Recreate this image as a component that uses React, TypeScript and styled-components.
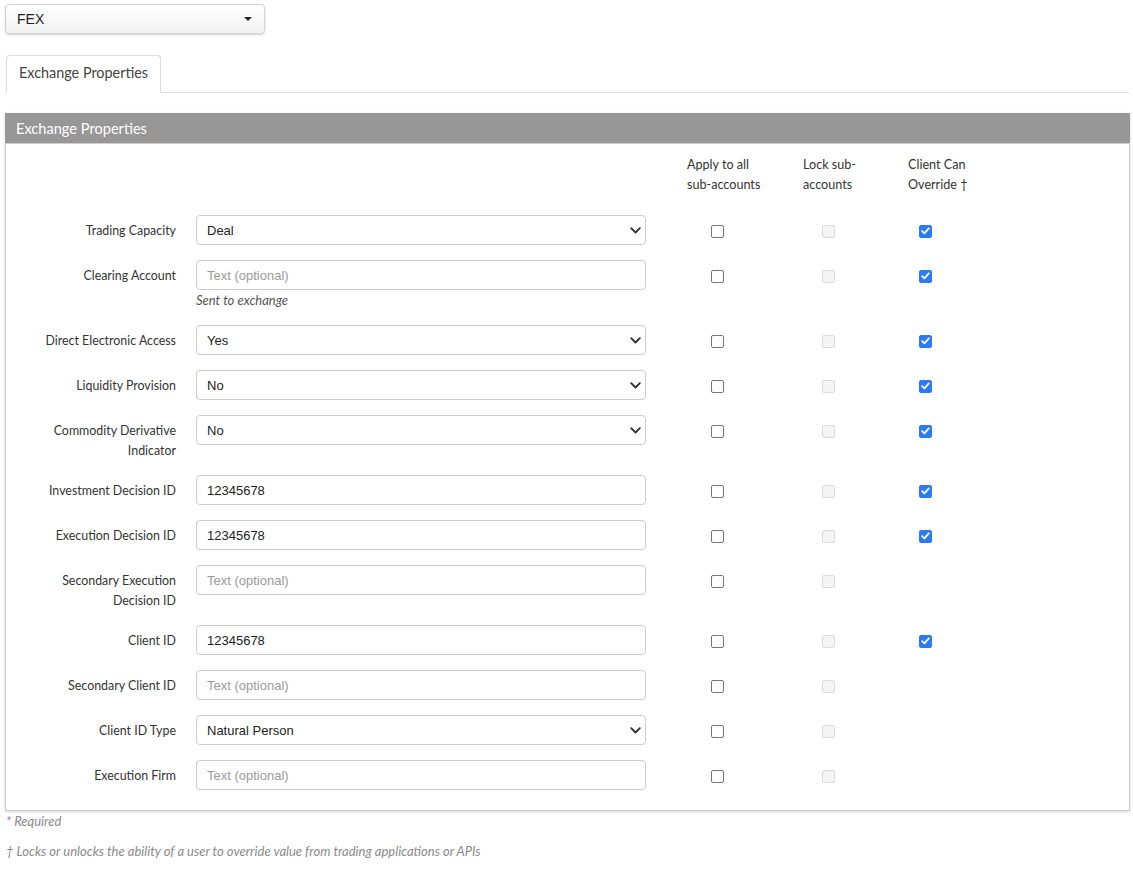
import styled, { createGlobalStyle } from "styled-components"

const GlobalStyle = createGlobalStyle`
    html, body {
        margin: 0;
        padding: 0;
        background: #ffffff;
    }
    body {
        font-family: Lato, "Noto Sans", sans-serif;
        color: #333;
    }
`

type Row = {
    label: string
    kind: 'select' | 'text'
    value?: string
    help?: string
    override?: boolean
}

const rows: Row[] = [
    { label: 'Trading Capacity', kind: 'select', value: 'Deal', override: true },
    { label: 'Clearing Account', kind: 'text', help: 'Sent to exchange', override: true },
    { label: 'Direct Electronic Access', kind: 'select', value: 'Yes', override: true },
    { label: 'Liquidity Provision', kind: 'select', value: 'No', override: true },
    { label: 'Commodity Derivative Indicator', kind: 'select', value: 'No', override: true },
    { label: 'Investment Decision ID', kind: 'text', value: '12345678', override: true },
    { label: 'Execution Decision ID', kind: 'text', value: '12345678', override: true },
    { label: 'Secondary Execution Decision ID', kind: 'text', override: false },
    { label: 'Client ID', kind: 'text', value: '12345678', override: true },
    { label: 'Secondary Client ID', kind: 'text', override: false },
    { label: 'Client ID Type', kind: 'select', value: 'Natural Person', override: false },
    { label: 'Execution Firm', kind: 'text', override: false },
]

const Chevron = () => (
    <svg width="11" height="7" viewBox="0 0 11 7">
        <path d="M1.2 1.2 L5.5 5.5 L9.8 1.2" fill="none" stroke="#333" strokeWidth="1.9" strokeLinecap="round" strokeLinejoin="round" />
    </svg>
)

const Check = () => (
    <svg width="9" height="8" viewBox="0 0 9 8">
        <path d="M1.2 4.2 L3.4 6.4 L7.8 1.4" fill="none" stroke="#fff" strokeWidth="1.8" strokeLinecap="round" strokeLinejoin="round" />
    </svg>
)

export default function App() {
    return (
        <Page>
            <GlobalStyle />
            <Dropdown>
                <span>FEX</span>
                <Caret />
            </Dropdown>

            <TabStrip>
                <Tab>Exchange Properties</Tab>
            </TabStrip>

            <Panel>
                <PanelHeader>Exchange Properties</PanelHeader>
                <PanelBody>
                    <HeadRow>
                        <div />
                        <div />
                        <HeadCell offset={41}>Apply to all<br />sub-accounts</HeadCell>
                        <HeadCell offset={13}>Lock sub-<br />accounts</HeadCell>
                        <HeadCell offset={42}>Client Can<br />Override †</HeadCell>
                    </HeadRow>

                    {rows.map((row) => (
                        <FieldRow key={row.label}>
                            <Label>{row.label}</Label>
                            <div>
                                {row.kind === 'select' ? (
                                    <SelectBox>
                                        <span>{row.value}</span>
                                        <ChevronSpot><Chevron /></ChevronSpot>
                                    </SelectBox>
                                ) : (
                                    <TextInput placeholder="Text (optional)" defaultValue={row.value ?? ''} />
                                )}
                                {row.help && <Help>{row.help}</Help>}
                            </div>
                            <BoxCell shift={-1}>
                                <Box />
                            </BoxCell>
                            <BoxCell>
                                <Box disabled />
                            </BoxCell>
                            <BoxCell>
                                {row.override && <Box checked><Check /></Box>}
                            </BoxCell>
                        </FieldRow>
                    ))}
                </PanelBody>
            </Panel>

            <Note>* Required</Note>
            <Note spaced>† Locks or unlocks the ability of a user to override value from trading applications or APIs</Note>
        </Page>
    )
}

const Page = styled.div`
    padding: 4px 3px 20px 5px;
`

const Dropdown = styled.div`
    box-sizing: border-box;
    width: 260px;
    height: 30px;
    display: flex;
    align-items: center;
    justify-content: space-between;
    padding: 0 12px 0 11px;

    font-family: "Liberation Sans", Arial, sans-serif;
    font-size: 14px;
    color: #222;

    border: 1px solid #d2d2d2;
    border-radius: 4px;
    background: linear-gradient(#ffffff, #f1f1f1);
    box-shadow: 0 1px 2px rgba(0, 0, 0, 0.18);
`

const Caret = styled.span`
    width: 0;
    height: 0;
    border-left: 4px solid transparent;
    border-right: 4px solid transparent;
    border-top: 4px solid #222;
`

const TabStrip = styled.div`
    display: flex;
    margin-top: 21px;
    padding-left: 1px;
    border-bottom: 1px solid #dddddd;
    margin-right: 1px;
`

const Tab = styled.div`
    box-sizing: border-box;
    height: 38px;
    padding: 0 12px 3px 12px;
    display: flex;
    align-items: center;
    margin-bottom: -1px;

    font-size: 14.4px;
    color: #444;

    background: #fff;
    border: 1px solid #dddddd;
    border-bottom-color: #fff;
    border-radius: 4px 4px 0 0;
`

const Panel = styled.div`
    margin-top: 20px;
    border: 1px solid #cccccc;
    box-shadow: 0 1px 3px rgba(0, 0, 0, 0.15);
    background: #fff;
`

const PanelHeader = styled.div`
    height: 30px;
    display: flex;
    align-items: center;
    padding-left: 11px;

    font-size: 14.6px;
    color: #ffffff;
    background: #979797;
    border-bottom: 1px solid #cfcfcf;
    margin: -1px -1px 0 -1px;
`

const columns = `190px 450px 144px 76px 118px`

const PanelBody = styled.div`
    padding: 11px 0 5px 0;
`

const HeadRow = styled.div`
    display: grid;
    grid-template-columns: ${columns};
    margin-bottom: 20px;
`

const HeadCell = styled.div<{ offset: number }>`
    padding-left: ${(p) => p.offset}px;
    font-size: 12.6px;
    line-height: 20px;
    color: #333;
`

const FieldRow = styled.div`
    display: grid;
    grid-template-columns: ${columns};
    align-items: start;
    margin-bottom: 15px;
`

const Label = styled.div`
    padding: 6px 20px 0 20px;
    margin-bottom: -1px;
    text-align: right;
    font-size: 12.4px;
    line-height: 20px;
    color: #333;
`

const fieldBase = `
    box-sizing: border-box;
    width: 450px;
    height: 30px;
    border: 1px solid #cccccc;
    border-radius: 4px;
    background: #fff;
    font-family: "Liberation Sans", Arial, sans-serif;
    font-size: 13px;
    color: #222;
    padding: 0 10px;
`

const TextInput = styled.input`
    ${fieldBase}
    display: block;
    outline: none;

    &::placeholder {
        color: #9a9a9a;
    }
`

const SelectBox = styled.div`
    ${fieldBase}
    position: relative;
    display: flex;
    align-items: center;
`

const ChevronSpot = styled.span`
    position: absolute;
    right: 4px;
    top: 11px;
    display: flex;
`

const Help = styled.div`
    font-size: 13px;
    font-style: italic;
    line-height: 20px;
    color: #555;
`

const BoxCell = styled.div<{ shift?: number }>`
    height: 30px;
    display: flex;
    align-items: center;
    justify-content: center;
    padding-top: 2px;
    box-sizing: border-box;
    margin-left: ${(p) => (p.shift ?? 0) * 2}px;
`

const Box = styled.span<{ checked?: boolean; disabled?: boolean }>`
    box-sizing: border-box;
    width: 13px;
    height: 13px;
    display: flex;
    align-items: center;
    justify-content: center;
    border-radius: 2px;
    border: 1px solid ${(p) => (p.checked ? '#2d7bf4' : p.disabled ? '#dcdcdc' : '#767676')};
    background: ${(p) => (p.checked ? '#2d7bf4' : p.disabled ? '#f4f4f4' : '#ffffff')};
`

const Note = styled.div<{ spaced?: boolean }>`
    margin-top: ${(p) => (p.spaced ? 10 : 0)}px;
    padding-left: 1px;
    font-size: 13px;
    font-style: italic;
    line-height: 20px;
    color: #8a8a8a;
`
